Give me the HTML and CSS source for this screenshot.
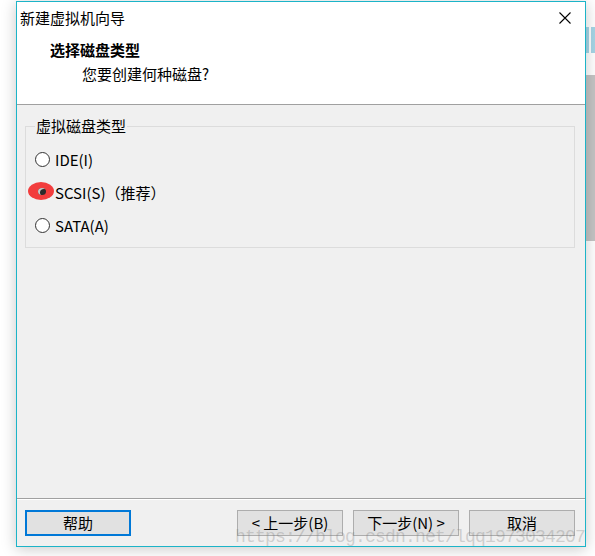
FILE: index.html
```html
<!DOCTYPE html>
<html lang="zh-CN">
<head>
  <meta charset="UTF-8" />
  <meta name="viewport" content="width=device-width, initial-scale=1.0"/>
  <title>新建虚拟机向导</title>
  <link rel="stylesheet" href="styles.css">
</head>
<body>

  <div class="wizard">
    <div class="wizard-top">
      <div class="titlebar">
        <span class="title">新建虚拟机向导</span>
        <svg class="close" width="12" height="12" viewBox="0 0 12 12">
          <path d="M0.5 0.5 L11.5 11.5 M11.5 0.5 L0.5 11.5" stroke="#000" stroke-width="1.1" fill="none"/>
        </svg>
      </div>
      <div class="header">
        <h2>选择磁盘类型</h2>
        <p>您要创建何种磁盘?</p>
      </div>
    </div>

    <div class="wizard-body">
      <fieldset class="group">
        <legend>虚拟磁盘类型</legend>
        <label class="option">
          <span class="radio"></span>
          <span>IDE(I)</span>
        </label>
        <label class="option">
          <span class="radio checked"></span>
          <span>SCSI(S)（推荐）</span>
        </label>
        <label class="option">
          <span class="radio"></span>
          <span>SATA(A)</span>
        </label>
      </fieldset>
    </div>

    <div class="wizard-footer">
      <button class="btn default">帮助</button>
      <div class="nav-buttons">
        <button class="btn">&lt; 上一步(B)</button>
        <button class="btn">下一步(N) &gt;</button>
        <button class="btn">取消</button>
      </div>
    </div>

    <div class="watermark">https://blog.csdn.net/lqq1973034207</div>
  </div>

  <div class="behind">
    <div class="behind-logo"></div>
    <div class="behind-panel"></div>
  </div>

</body>
</html>
```

FILE: styles.css
```css
body {
  margin: 0;
  height: 556px;
  box-sizing: border-box;
  padding: 1px 0 0 16px;
  display: flex;
  align-items: flex-start;
  overflow: hidden;
  background: #fff;
  font-family: "Noto Sans CJK SC", "Microsoft YaHei", sans-serif;
  font-size: 15px;
  color: #000;
}

.wizard {
  position: relative;
  width: 570px;
  height: 546px;
  box-sizing: border-box;
  border: 1px solid #1cb4c8;
  background: #f0f0f0;
  display: flex;
  flex-direction: column;
  box-shadow: 0 2px 14px rgba(0,0,0,0.22);
  z-index: 1;
}

.wizard-top {
  background: #fff;
  height: 103px;
  box-sizing: border-box;
  border-bottom: 1px solid #a0a0a0;
}

.titlebar {
  height: 32px;
  display: flex;
  align-items: center;
  justify-content: space-between;
  padding: 0 14px 0 3px;
}

.title {
  line-height: 20px;
}

.header {
  padding-top: 6px;
}

.header h2 {
  margin: 0;
  padding-left: 33px;
  font-size: 15px;
  font-weight: bold;
  line-height: 20px;
}

.header p {
  margin: 4px 0 0;
  padding-left: 65px;
  line-height: 20px;
}

.wizard-body {
  flex: 1;
  padding: 11px 10px 0 8px;
}

.group {
  margin: 0;
  padding: 7px 9px 5px;
  border: 1px solid #dcdcdc;
  min-width: 0;
}

.group legend {
  padding: 0 1px;
  line-height: 20px;
}

.option {
  display: flex;
  align-items: center;
  gap: 5px;
  height: 33px;
}

.radio {
  position: relative;
  width: 15px;
  height: 15px;
  box-sizing: border-box;
  border: 1px solid #333;
  border-radius: 50%;
  background: #fff;
}

.radio.checked {
  border-color: transparent;
  background: transparent;
}

.radio.checked::before {
  content: "";
  position: absolute;
  left: -8px;
  top: -4px;
  width: 26px;
  height: 18px;
  border-radius: 50%;
  background: #f23d3d;
}

.radio.checked::after {
  content: "";
  position: absolute;
  left: 2px;
  top: 2px;
  width: 8px;
  height: 7px;
  border-radius: 50%;
  background: #2b2b2b;
  box-shadow: inset 2px 1px 0 #c9c9c9;
}

.wizard-footer {
  height: 48px;
  box-sizing: border-box;
  border-top: 1px solid #a0a0a0;
  box-shadow: inset 0 1px 0 #fff;
  padding: 11px 10px 0 8px;
  display: flex;
  align-items: flex-start;
  justify-content: space-between;
}

.nav-buttons {
  display: flex;
  gap: 10px;
}

.btn {
  width: 106px;
  height: 26px;
  box-sizing: border-box;
  padding: 0;
  border: 1px solid #adadad;
  background: #e1e1e1;
  font-family: inherit;
  font-size: 15px;
  line-height: 20px;
  color: #000;
}

.btn.default {
  border: 2px solid #0078d7;
}

.watermark {
  position: absolute;
  left: 218px;
  top: 525px;
  font-family: "Liberation Mono", monospace;
  font-size: 18px;
  letter-spacing: -0.8px;
  line-height: 20px;
  color: rgba(120,120,120,0.3);
  white-space: nowrap;
  pointer-events: none;
}

.behind {
  width: 9px;
  display: flex;
  flex-direction: column;
  padding-top: 26px;
}

.behind-logo {
  height: 26px;
  background: linear-gradient(90deg, #8fcbe0 0 3px, #fff 3px 5px, #8fcbe0 5px);
  opacity: 0.8;
}

.behind-panel {
  margin-top: 22px;
  height: 166px;
  background: #c4c4c4;
}
```
